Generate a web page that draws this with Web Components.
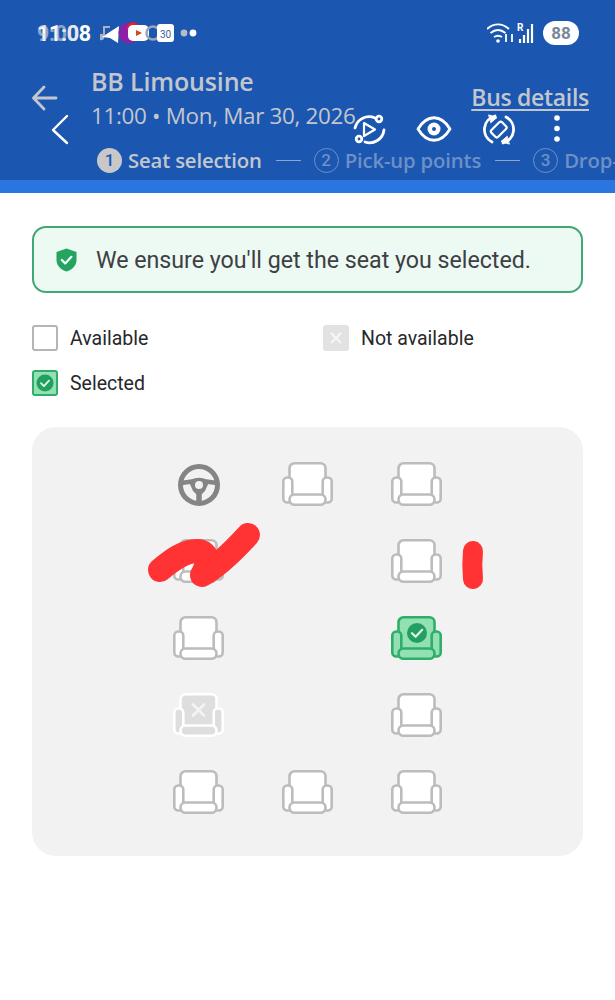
<!DOCTYPE html>
<html>
<head>
<meta charset="utf-8">
<style>
    html, body { margin: 0; background: #fff; }
    body { width: 615px; height: 1000px; overflow: hidden; font-family: Roboto, "Liberation Sans", sans-serif; }
</style>
</head>
<body>
<bus-screen>
    <bus-header slot="header"></bus-header>
    <notice-banner>We ensure you'll get the seat you selected.</notice-banner>
    <seat-legend></seat-legend>
    <seat-map></seat-map>
</bus-screen>

<script>
const seatSvg = (state) => {
    const looks = {
        free: { stroke: "#bcbcbc", fill: "#fff", w: 2.6 },
        selected: { stroke: "#2fae6b", fill: "#93e0b2", w: 2.6 },
        blocked: { stroke: "#fff", fill: "#dedede", w: 2.6 }
    };
    const s = looks[state];
    let extra = "";
    if (state === "selected") {
        extra = `<circle cx="26" cy="17" r="10" fill="#23a061" stroke="none"/>
                 <path d="M21 17.200l3.600 3.600 6.600-7" fill="none" stroke="#dff5e8" stroke-width="2.200" stroke-linecap="round" stroke-linejoin="round"/>`;
    }
    if (state === "blocked") {
        extra = `<path d="M20 11.500l11 11M31 11.500l-11 11" stroke="#f4f4f4" stroke-width="2.600" stroke-linecap="round"/>`;
    }
    return `<svg width="51" height="44" viewBox="0 0 51 44" fill="${s.fill}" stroke="${s.stroke}" stroke-width="${s.w}">
        <rect x="7.500" y="1.300" width="36" height="33" rx="5"/>
        <rect x="1.300" y="15.500" width="9" height="25" rx="4"/>
        <rect x="40.700" y="15.500" width="9" height="25" rx="4"/>
        <rect x="7.500" y="32.500" width="36" height="10.200" rx="5"/>
        ${extra}
    </svg>`;
};

class BusScreen extends HTMLElement {
    constructor() {
        super();
        this.attachShadow({ mode: "open" }).innerHTML = `
          <style>
              :host { display: block; width: 615px; }
              .content { display: flex; flex-direction: column; padding: 33px 32px 0; }
          </style>
          <slot name="header"></slot>
          <div class="content"><slot></slot></div>
        `;
    }
}

class BusHeader extends HTMLElement {
    constructor() {
        super();
        this.attachShadow({ mode: "open" }).innerHTML = `
          <style>
              :host { display: block; position: relative; height: 193px; background: #1b57b0; overflow: hidden; color: #c3c7cd; font-family: "Open Sans", Roboto, sans-serif; }
              .band { position: absolute; left: 0; right: 0; bottom: 0; height: 13px; background: #2a75e0; }
              .status { display: flex; align-items: center; height: 26px; padding: 20px 36px 0 37px; color: #fff; }
              .time { position: relative; font: 700 21.500px Roboto, sans-serif; width: 56px; letter-spacing: -0.300px; }
              .time i { position: absolute; left: 0; top: 0; font-style: normal; opacity: .6; color: #d8d8d8; }
              .notes { display: flex; align-items: center; margin-left: 7px; }
              .right { margin-left: auto; display: flex; align-items: center; gap: 9px; }
              .batt { width: 36px; height: 24px; border-radius: 12px; background: #fff; color: #7a8699; font: 700 17px/24px Roboto, sans-serif; text-align: center; }
              .main { display: flex; padding: 20px 26px 0 32px; height: 80px; }
              .arrow { width: 26px; height: 26px; margin: 19px 33px 0 0; flex: none; }
              .title { font: 600 25px/30px "Open Sans", Roboto, sans-serif; letter-spacing: -.15px; }
              .sub { font: 400 22.400px/30px "Open Sans", Roboto, sans-serif; margin-top: 5px; white-space: nowrap; width: 262px; letter-spacing: -.3px; }
              .details { margin-left: auto; margin-top: 16px; font: 600 23px/30px "Open Sans", Roboto, sans-serif; text-decoration: underline; text-decoration-thickness: 2px; text-underline-offset: 3px; white-space: nowrap; letter-spacing: -.3px; }
              .steps { display: flex; align-items: center; padding-left: 97px; white-space: nowrap; height: 28px; font: 600 20.300px/28px "Open Sans", Roboto, sans-serif; letter-spacing: -.15px; }
              .num { flex: none; width: 25px; height: 25px; box-sizing: border-box; border-radius: 50%; margin-right: 6px; font: 500 17px/25px Roboto, sans-serif; text-align: center; letter-spacing: 0; }
              .on .num { background: #c8c8c8; color: #1b57b0; }
              .step { display: flex; align-items: center; flex: none; }
              .off { color: #6d90c6; }
              .off .num { border: 1.600px solid #6d90c6; line-height: 22px; }
              .dash { flex: none; width: 25px; height: 0; border-top: 1.400px solid #8ba6cf; margin: 0 13px 0 14px; }
              .overlay { position: absolute; left: 0; top: 0; width: 615px; height: 193px; }
          </style>
          <div class="status">
              <div class="time"><i>9:00</i>11:08</div>
              <div class="notes">
                  <svg width="100" height="26" viewBox="0 0 100 26">
                      <circle cx="1" cy="17" r="3.200" fill="#a9b3c4"/><path d="M4 15v-8h6" fill="none" stroke="#a9b3c4" stroke-width="2"/>
                      <path d="M19 6L2 17l8 1 8 5z" fill="#fff"/>
                      <circle cx="29" cy="13" r="10.500" fill="#8e1fa8"/><circle cx="33" cy="8" r="6" fill="#d8213a"/>
                      <rect x="28" y="5" width="21" height="16" rx="5" fill="#fff"/><path d="M36 10l6 3-6 3z" fill="#d2451e"/>
                      <circle cx="53" cy="13" r="6.500" fill="none" stroke="#9aa6ba" stroke-width="2.500"/>
                      <rect x="57" y="4" width="17" height="18" rx="3" fill="#fff"/>
                      <text x="65.500" y="18" text-anchor="middle" font-family="Roboto" font-size="10" fill="#3a5f9c">30</text>
                      <circle cx="84" cy="13" r="3.400" fill="#b6bcc7"/><circle cx="93" cy="13" r="3.400" fill="#fff"/>
                  </svg>
              </div>
              <div class="right">
                  <svg width="47" height="24" viewBox="0 0 47 24" fill="none" stroke="#fff">
                      <path d="M0 8c7-6 15-6 22 0M3.500 12c5-4 10-4 15 0M7 16c3-2 5-2 8 0" stroke-width="2"/>
                      <circle cx="11" cy="20" r="1.800" fill="#fff" stroke="none"/>
                      <path d="M19 13v8M25 13v8" stroke-width="1.800"/>
                      <text x="30" y="10" font-family="Roboto" font-size="10" font-weight="700" fill="#fff" stroke="none">R</text>
                      <path d="M33 18v4M37 14v8M41 8v14M45 3v19" stroke-width="2.200"/>
                  </svg>
                  <div class="batt">88</div>
              </div>
          </div>
          <div class="main">
              <svg class="arrow" viewBox="0 0 26 26" fill="none" stroke="#c3c7cd" stroke-width="2.800" stroke-linecap="round" stroke-linejoin="round"><path d="M24 13H2M12 2L1.500 13 12 24"/></svg>
              <div>
                  <div class="title">BB Limousine</div>
                  <div class="sub">11:00 • Mon, Mar 30, 2026</div>
              </div>
              <div class="details">Bus details</div>
          </div>
          <div class="steps">
              <div class="step on"><span class="num">1</span>Seat selection</div>
              <div class="dash"></div>
              <div class="step off"><span class="num">2</span>Pick-up points</div>
              <div class="dash"></div>
              <div class="step off"><span class="num">3</span>Drop-off points</div>
          </div>
          <div class="band"></div>
          <svg class="overlay" viewBox="0 0 615 193" fill="none" stroke="#fff" stroke-width="2.800" stroke-linecap="round" stroke-linejoin="round">
              <path d="M67 116L53 130l14 13" stroke-width="2.400"/>
              <path d="M355 128a14.500 14.500 0 0 1 20-10M384 130a14.500 14.500 0 0 1-19 12"/>
              <circle cx="379" cy="119" r="2.800"/><circle cx="359" cy="139" r="2.800"/>
              <path d="M364 123l11 6.500-11 6.500z" stroke-width="2.200"/>
              <path d="M418 129c9-15 23-15 32 0c-9 15-23 15-32 0z"/>
              <circle cx="434" cy="129" r="6.500" fill="#fff" stroke="none"/>
              <circle cx="434" cy="129" r="2" fill="#1b57b0" stroke="none"/>
              <path d="M495 116A14 14 0 0 0 492 142M503 143A14 14 0 0 0 506 117"/>
              <path d="M489 115l8 2.500-6 5zM509 144l-8-2.500 6-5z" fill="#fff" stroke-width="1"/>
              <rect x="494" y="122" width="9.500" height="15" rx="2" transform="rotate(45 498.700 129.500)" stroke-width="2.200"/>
              <circle cx="557" cy="118" r="2.800" fill="#fff" stroke="none"/>
              <circle cx="557" cy="128.500" r="2.800" fill="#fff" stroke="none"/>
              <circle cx="557" cy="139" r="2.800" fill="#fff" stroke="none"/>
          </svg>
        `;
    }
}

class NoticeBanner extends HTMLElement {
    constructor() {
        super();
        this.attachShadow({ mode: "open" }).innerHTML = `
          <style>
              :host { display: flex; align-items: center; gap: 19px; box-sizing: border-box; height: 67px; padding: 0 22px; background: #edf9f3; border: 2px solid #3fa873; border-radius: 14px; color: #3d4043; font: 400 23.200px Roboto, sans-serif; white-space: nowrap; }
              svg { flex: none; }
          </style>
          <svg width="21" height="24" viewBox="0 0 21 24">
              <path d="M10.500 0.500L20.500 4v8c0 5.500-4 9.500-10 11.500C4.500 21.500 0.500 17.500 0.500 12V4z" fill="#23a45f"/>
              <path d="M5.800 12l3.400 3.400 6.200-6.600" fill="none" stroke="#fff" stroke-width="2.200" stroke-linecap="round" stroke-linejoin="round"/>
          </svg>
          <slot></slot>
        `;
    }
}

class SeatLegend extends HTMLElement {
    constructor() {
        super();
        const box = (cls, inner) => `<span class="box ${cls}">${inner}</span>`;
        this.attachShadow({ mode: "open" }).innerHTML = `
          <style>
              :host { display: grid; grid-template-columns: 291px 1fr; row-gap: 19px; margin-top: 32px; font: 400 19.500px/26px Roboto, sans-serif; color: #26282b; }
              .item { display: flex; align-items: center; gap: 12px; height: 26px; }
              .item span:last-child { padding-top: 2px; }
              .box { flex: none; box-sizing: border-box; width: 26px; height: 26px; border-radius: 3px; display: flex; align-items: center; justify-content: center; }
              .free { border: 2px solid #b5b5b5; background: #fff; }
              .taken { background: #e2e2e2; }
              .sel { border: 2px solid #2fae6b; background: #93e0b2; }
          </style>
          <div class="item">${box("free", "")}<span>Available</span></div>
          <div class="item">${box("taken", `<svg width="14" height="14" viewBox="0 0 14 14"><path d="M2.500 2.500l9 9M11.500 2.500l-9 9" stroke="#f6f6f6" stroke-width="2.200" stroke-linecap="round"/></svg>`)}<span>Not available</span></div>
          <div class="item">${box("sel", `<svg width="18" height="18" viewBox="0 0 18 18"><circle cx="9" cy="9" r="8.500" fill="#23a061"/><path d="M5 9.200l2.900 2.900 5.100-5.400" fill="none" stroke="#dff5e8" stroke-width="1.800" stroke-linecap="round" stroke-linejoin="round"/></svg>`)}<span>Selected</span></div>
        `;
    }
}

class SeatMap extends HTMLElement {
    constructor() {
        super();
        const rows = [
            ["wheel", "free", "free"],
            ["free", "", "free"],
            ["free", "", "selected"],
            ["blocked", "", "free"],
            ["free", "free", "free"]
        ];
        const cells = rows.flat().map((c) => {
            if (c === "") return "<div></div>";
            if (c === "wheel") return `<div class="cell"><svg width="44" height="44" viewBox="0 0 44 44" fill="none" stroke="#858585">
                <circle cx="22" cy="23" r="18.500" stroke-width="5"/>
                <path d="M4 21l11-1.500q7-3 14 0L40 21" stroke-width="4.500"/>
                <path d="M22 26v15" stroke-width="5.500"/>
                <path d="M12 20l4 9 3 3h6l3-3 4-9z" fill="#858585" stroke="none"/>
                <circle cx="22" cy="23" r="4" fill="#f2f2f2" stroke="none"/>
            </svg></div>`;
            return `<div class="cell">${seatSvg(c)}</div>`;
        }).join("");
        this.attachShadow({ mode: "open" }).innerHTML = `
          <style>
              :host { display: block; position: relative; box-sizing: border-box; height: 429px; margin-top: 31px; padding: 35px 0 0 141px; background: #f2f2f2; border-radius: 24px; }
              .grid { display: grid; grid-template-columns: repeat(3, 51px); grid-auto-rows: 44px; column-gap: 58px; row-gap: 33px; }
              .cell { display: flex; justify-content: center; align-items: center; }
              .scribble { position: absolute; left: 0; top: 0; width: 551px; height: 429px; pointer-events: none; }
          </style>
          <div class="grid">${cells}</div>
          <svg class="scribble" viewBox="0 0 551 429" fill="none" stroke="#ff3333" stroke-linecap="round" stroke-linejoin="round">
              <path d="M128 143C140 133 152 124 165 124C178 124 176 138 170 148C185 140 205 120 216 108" stroke-width="24"/>
              <path d="M441 124c-1 10-1 18 0 28" stroke-width="20"/>
          </svg>
        `;
    }
}

customElements.define("bus-screen", BusScreen);
customElements.define("bus-header", BusHeader);
customElements.define("notice-banner", NoticeBanner);
customElements.define("seat-legend", SeatLegend);
customElements.define("seat-map", SeatMap);
</script>
</body>
</html>
